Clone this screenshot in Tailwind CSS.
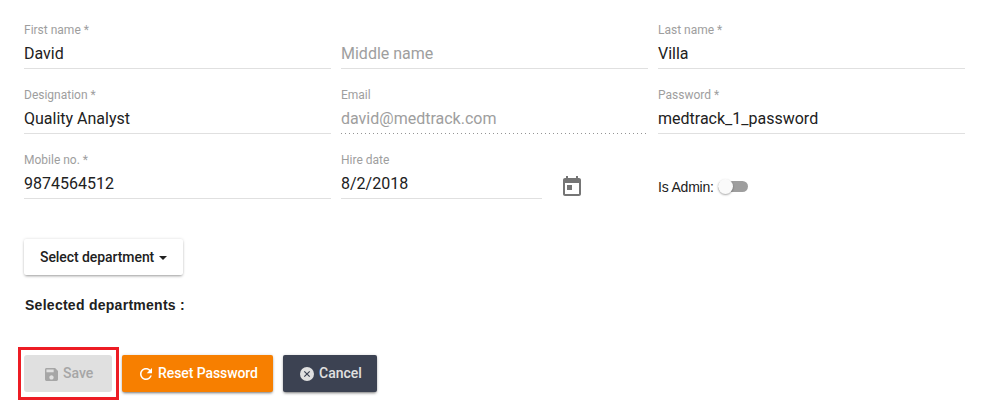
<!DOCTYPE html>
<html lang="en">
<head>
<meta charset="utf-8">
<title>Edit user</title>
<script src="https://cdn.jsdelivr.net/npm/@tailwindcss/browser@4"></script>
</head>
<body class="bg-white text-[#212121] font-['Roboto',sans-serif]">
<form class="pl-6 pt-1">
  <div class="grid w-[941px] grid-cols-[307px_307px_307px] gap-x-[10px]">
    <label class="flex h-[65px] flex-col border-b border-[#e0e0e0] pt-[17px]">
      <span class="text-xs leading-[18px] text-[#9e9e9e]">First name *</span>
      <span class="mt-[5px] text-base leading-5">David</span>
    </label>
    <label class="flex h-[65px] flex-col border-b border-[#e0e0e0] pt-10">
      <span class="text-base leading-5 text-[#9e9e9e]">Middle name</span>
    </label>
    <label class="flex h-[65px] flex-col border-b border-[#e0e0e0] pt-[17px]">
      <span class="text-xs leading-[18px] text-[#9e9e9e]">Last name *</span>
      <span class="mt-[5px] text-base leading-5">Villa</span>
    </label>
    <label class="flex h-[65px] flex-col border-b border-[#e0e0e0] pt-[17px]">
      <span class="text-xs leading-[18px] text-[#9e9e9e]">Designation *</span>
      <span class="mt-[5px] text-base leading-5">Quality Analyst</span>
    </label>
    <label class="flex h-[65px] flex-col pt-[17px]">
      <span class="text-xs leading-[18px] text-[#9e9e9e]">Email</span>
      <span class="mt-[5px] text-base leading-5 text-[#9e9e9e]">david@medtrack.com</span>
      <span class="mt-1 h-px bg-[linear-gradient(to_right,#949494_0,#949494_33%,transparent_0)] bg-[length:4px_100%] bg-repeat-x"></span>
    </label>
    <label class="flex h-[65px] flex-col border-b border-[#e0e0e0] pt-[17px]">
      <span class="text-xs leading-[18px] text-[#9e9e9e]">Password *</span>
      <span class="mt-[5px] text-base leading-5">medtrack_1_password</span>
    </label>
    <label class="flex h-[65px] flex-col border-b border-[#e0e0e0] pt-[17px]">
      <span class="text-xs leading-[18px] text-[#9e9e9e]">Mobile no. *</span>
      <span class="mt-[5px] text-base leading-5">9874564512</span>
    </label>
    <div class="flex">
      <label class="flex h-[65px] w-[201px] flex-col border-b border-[#e0e0e0] pt-[17px]">
        <span class="text-xs leading-[18px] text-[#9e9e9e]">Hire date</span>
        <span class="mt-[5px] text-base leading-5">8/2/2018</span>
      </label>
      <svg class="ml-[18px] mt-[41px] size-6 fill-[#757575]" viewBox="0 0 24 24"><path d="M19 3h-1V1h-2v2H8V1H6v2H5c-1.11 0-1.99.9-1.99 2L3 19c0 1.1.89 2 2 2h14c1.1 0 2-.9 2-2V5c0-1.1-.9-2-2-2zm0 16H5V8h14v11zM7 10h5v5H7z"/></svg>
    </div>
    <div class="flex items-start pt-[41px] h-[65px]">
      <span class="w-[60px] whitespace-nowrap font-['Liberation_Sans',sans-serif] text-sm leading-6 tracking-[-0.2px]">Is Admin:</span>
      <span class="mt-[6px] flex h-[11px] w-[30px] items-center rounded-full bg-[#9e9e9e]">
        <span class="size-[15px] shrink-0 rounded-full bg-[#fafafa] shadow-[0_1px_2px_rgba(0,0,0,0.35)]"></span>
      </span>
    </div>
  </div>

  <button type="button" class="mt-10 flex h-9 w-[159px] items-center rounded-[2px] bg-white pl-4 text-sm font-medium tracking-[-0.07px] whitespace-nowrap shadow-[0_2px_3px_-1px_rgba(0,0,0,0.35),0_0_3px_rgba(0,0,0,0.15)]">
    Select department
    <svg class="ml-[5px] mt-0.5 h-1 w-2 fill-current" viewBox="0 0 8 4"><path d="M0 0h8L4 4z"/></svg>
  </button>

  <p class="ml-px mt-5 font-['Liberation_Sans',sans-serif] text-sm leading-5 font-bold tracking-[0.27px]">Selected departments :</p>

  <div class="-ml-1.5 mt-8 flex items-start">
    <div class="flex h-[53px] w-[101px] border-[3px] border-[#ed1c24] pl-[3px] pt-[5px]">
      <button type="button" disabled class="flex h-[37px] w-[88px] items-center rounded-[3px] bg-[#e0e0e0] pl-[21px] text-sm font-medium text-[#a6a6a6]">
        <svg class="mt-px h-[13px] w-[13px] fill-current" viewBox="3 3 18 18"><path d="M17 3H5c-1.11 0-2 .9-2 2v14c0 1.1.89 2 2 2h14c1.1 0 2-.9 2-2V7l-4-4zm-5 16c-1.66 0-3-1.34-3-3s1.34-3 3-3 3 1.34 3 3-1.34 3-3 3zm3-10H5V5h10v4z"/></svg>
        <span class="mb-[2px] ml-[5px]">Save</span>
      </button>
    </div>
    <button type="button" class="ml-[3px] mt-2 flex h-[37px] w-[151px] items-center rounded-[2px] bg-[#f77f00] pl-[18px] text-sm font-medium tracking-[-0.08px] whitespace-nowrap text-white shadow-[0_2px_3px_-1px_rgba(0,0,0,0.5),0_0_3px_rgba(0,0,0,0.15)]">
      <svg class="mt-px size-[12px] fill-current" viewBox="4 4 16 16"><path d="M17.65 6.35C16.2 4.9 14.21 4 12 4c-4.42 0-7.99 3.58-7.99 8s3.57 8 7.99 8c3.73 0 6.84-2.55 7.73-6h-2.08c-.82 2.33-3.04 4-5.65 4-3.31 0-6-2.69-6-6s2.69-6 6-6c1.66 0 3.14.69 4.22 1.78L13 11h7V4l-2.35 2.35z"/></svg>
      <span class="mb-[2px] ml-[6px]">Reset Password</span>
    </button>
    <button type="button" class="ml-[10px] mt-2 flex h-[37px] w-[94px] items-center rounded-[2px] bg-[#3c4252] pl-[17px] text-sm font-medium text-[#e0e0e0] shadow-[0_2px_3px_-1px_rgba(0,0,0,0.5),0_0_3px_rgba(0,0,0,0.15)]">
      <svg class="mt-px size-[14px]" viewBox="0 0 14 14"><circle cx="7" cy="7" r="7" fill="#e0e0e0"/><path d="M4.300 4.300 9.700 9.700M9.700 4.300 4.300 9.700" stroke="#3c4252" stroke-width="1.200"/></svg>
      <span class="mb-[2px] ml-[5px]">Cancel</span>
    </button>
  </div>
</form>
</body>
</html>
